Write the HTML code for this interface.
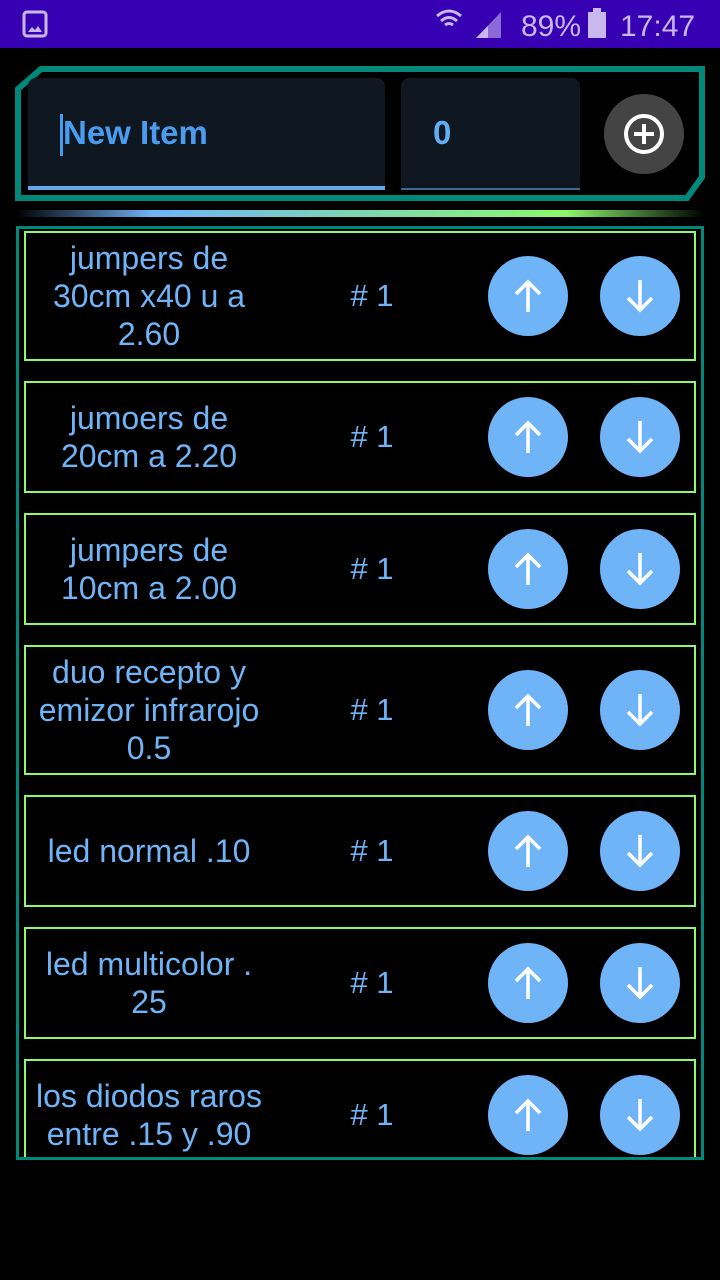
<!DOCTYPE html>
<html><head><meta charset="utf-8"><style>
*{margin:0;padding:0;box-sizing:border-box}
body{width:720px;height:1280px;background:#000;position:relative;overflow:hidden;font-family:"Liberation Sans",sans-serif;color:#70b4f8}
.abs{position:absolute}
.item{position:absolute;left:24px;width:672px;border:2px solid #8cf86c}
.t{position:absolute;left:-17px;width:280px;text-align:center;font-size:32px;line-height:38px;top:50%;transform:translateY(-50%);white-space:nowrap}
.n{position:absolute;left:296px;width:100px;text-align:center;font-size:31px;line-height:38px;top:50%;transform:translateY(-50%)}
.b{position:absolute;width:80px;height:80px;border-radius:50%;background:#70b4f8;top:50%;margin-top:-40px}
.b svg{position:absolute;left:0;top:0}
.u{left:462px}.d{left:574px}
</style></head><body>
<div class="abs" style="left:0;top:0;width:720px;height:48px;background:#3700b3"></div>
<svg class="abs" style="left:0;top:0" width="720" height="48">
<rect x="24" y="12" width="22" height="24" rx="3" fill="none" stroke="#c8b8ee" stroke-width="3"/>
<path d="M28 32 L32 27 L35 30 L38 26 L42 32Z" fill="#c8b8ee"/>
<path d="M437 16 Q449 6 461 16 M441 21 Q449 14 457 21 M445 25 Q449 22 453 25" stroke="#c8b8ee" stroke-width="3" fill="none"/>
<path d="M476 38 L501 12 L501 38Z" fill="#8b6ad8"/><path d="M476 38 L488 26 L488 38Z" fill="#c8b8ee"/>
<text x="521" y="36" font-size="30" fill="#c8b8ee" font-family="Liberation Sans">89%</text>
<rect x="588" y="12" width="18" height="26" fill="#c8b8ee"/><rect x="593" y="8" width="8" height="5" fill="#c8b8ee"/>
<text x="620" y="36" font-size="30" fill="#c8b8ee" font-family="Liberation Sans">17:47</text>
</svg>
<svg class="abs" style="left:0;top:0" width="720" height="240">
<polygon points="41,69 702,69 702,177 687,198 18,198 18,89" fill="none" stroke="#00897b" stroke-width="6"/>
<defs><linearGradient id="g" x1="0" x2="1"><stop offset="0" stop-color="#000"/><stop offset=".2" stop-color="#70b4f8"/><stop offset=".8" stop-color="#8cf86c"/><stop offset="1" stop-color="#000"/></linearGradient></defs>
<rect x="16" y="210" width="688" height="7" fill="url(#g)"/>
</svg>
<div class="abs" style="left:28px;top:78px;width:357px;height:112px;background:#0f1720;border-radius:8px 8px 0 0;border-bottom:4px solid #64a8ec"></div>
<div class="abs" style="left:60px;top:114px;width:3px;height:42px;background:#4a9cf0"></div>
<div class="abs" style="left:63px;top:114px;font-size:33px;font-weight:bold;color:#4a9cf0">New Item</div>
<div class="abs" style="left:401px;top:78px;width:179px;height:112px;background:#0f1720;border-radius:8px 8px 0 0;border-bottom:2px solid #3d6a90"></div>
<div class="abs" style="left:433px;top:114px;font-size:33px;font-weight:bold;color:#64acf4">0</div>
<div class="abs" style="left:604px;top:94px;width:80px;height:80px;border-radius:50%;background:#444"></div>
<svg class="abs" style="left:604px;top:94px" width="80" height="80"><circle cx="40" cy="40" r="18" fill="none" stroke="#fff" stroke-width="4"/><path d="M40 30V50M30 40H50" stroke="#fff" stroke-width="4"/></svg>
<div class="abs" style="left:16px;top:226px;width:688px;height:934px;border:3px solid #00897b"></div>
<div class="abs" style="left:19px;top:229px;width:682px;height:928px;overflow:hidden">
<div style="position:absolute;left:-19px;top:-229px;width:720px;height:1280px">

<div class="item" style="top:231px;height:130px"><div class="t">jumpers de<br>30cm x40 u a<br>2.60</div><div class="n"># 1</div>
<div class="b u"><svg width="80" height="80"><path d="M40 56V26M28 38L40 26L52 38" stroke="#fff" stroke-width="3.5" fill="none"/></svg></div>
<div class="b d"><svg width="80" height="80"><path d="M40 24V54M28 42L40 54L52 42" stroke="#fff" stroke-width="3.5" fill="none"/></svg></div></div>

<div class="item" style="top:381px;height:112px"><div class="t">jumoers de<br>20cm a 2.20</div><div class="n"># 1</div>
<div class="b u"><svg width="80" height="80"><path d="M40 56V26M28 38L40 26L52 38" stroke="#fff" stroke-width="3.5" fill="none"/></svg></div>
<div class="b d"><svg width="80" height="80"><path d="M40 24V54M28 42L40 54L52 42" stroke="#fff" stroke-width="3.5" fill="none"/></svg></div></div>

<div class="item" style="top:513px;height:112px"><div class="t">jumpers de<br>10cm a 2.00</div><div class="n"># 1</div>
<div class="b u"><svg width="80" height="80"><path d="M40 56V26M28 38L40 26L52 38" stroke="#fff" stroke-width="3.5" fill="none"/></svg></div>
<div class="b d"><svg width="80" height="80"><path d="M40 24V54M28 42L40 54L52 42" stroke="#fff" stroke-width="3.5" fill="none"/></svg></div></div>

<div class="item" style="top:645px;height:130px"><div class="t">duo recepto y<br>emizor infrarojo<br>0.5</div><div class="n"># 1</div>
<div class="b u"><svg width="80" height="80"><path d="M40 56V26M28 38L40 26L52 38" stroke="#fff" stroke-width="3.5" fill="none"/></svg></div>
<div class="b d"><svg width="80" height="80"><path d="M40 24V54M28 42L40 54L52 42" stroke="#fff" stroke-width="3.5" fill="none"/></svg></div></div>

<div class="item" style="top:795px;height:112px"><div class="t">led normal .10</div><div class="n"># 1</div>
<div class="b u"><svg width="80" height="80"><path d="M40 56V26M28 38L40 26L52 38" stroke="#fff" stroke-width="3.5" fill="none"/></svg></div>
<div class="b d"><svg width="80" height="80"><path d="M40 24V54M28 42L40 54L52 42" stroke="#fff" stroke-width="3.5" fill="none"/></svg></div></div>

<div class="item" style="top:927px;height:112px"><div class="t">led multicolor .<br>25</div><div class="n"># 1</div>
<div class="b u"><svg width="80" height="80"><path d="M40 56V26M28 38L40 26L52 38" stroke="#fff" stroke-width="3.5" fill="none"/></svg></div>
<div class="b d"><svg width="80" height="80"><path d="M40 24V54M28 42L40 54L52 42" stroke="#fff" stroke-width="3.5" fill="none"/></svg></div></div>

<div class="item" style="top:1059px;height:112px"><div class="t">los diodos raros<br>entre .15 y .90</div><div class="n"># 1</div>
<div class="b u"><svg width="80" height="80"><path d="M40 56V26M28 38L40 26L52 38" stroke="#fff" stroke-width="3.5" fill="none"/></svg></div>
<div class="b d"><svg width="80" height="80"><path d="M40 24V54M28 42L40 54L52 42" stroke="#fff" stroke-width="3.5" fill="none"/></svg></div></div>

</div></div>
</body></html>
